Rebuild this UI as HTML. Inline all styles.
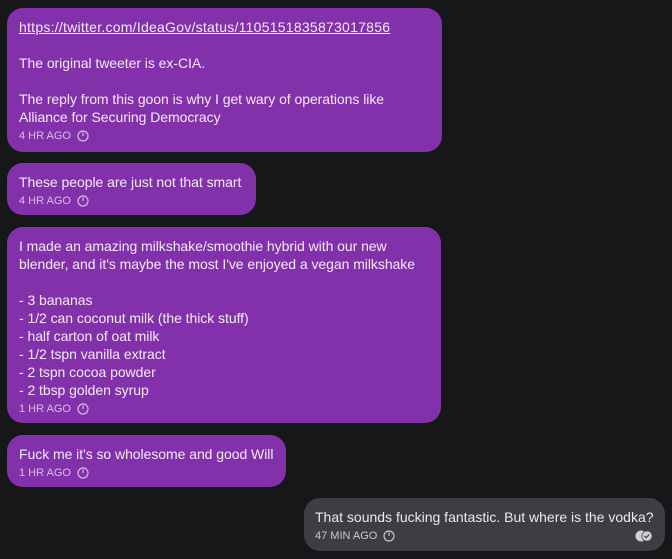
<!DOCTYPE html>
<html><head><style>
body{margin:0;background:#161718;width:672px;height:559px;overflow:hidden;font-family:"Liberation Sans",sans-serif;color:#f3eaf6;position:relative}
.b{position:absolute;background:#8331aa;border-radius:16px;padding:10px 12px 9px 12px;box-sizing:border-box;font-size:14px;line-height:18px;white-space:pre;letter-spacing:-0.05px}
.t{font-size:11px;line-height:18px;margin-top:1px;color:#d6bfe2;letter-spacing:0;display:flex;align-items:center}
.t svg{margin-left:6px}
a{color:#f3eaf6;text-decoration:underline;letter-spacing:0.25px}
.g{background:#3d3e42;color:#eaeaea}
.g .t{color:#c9c9cc}
</style></head><body>
<div class="b" style="left:7px;top:8px;width:435px;height:144px"><a>https://twitter.com/IdeaGov/status/1105151835873017856</a>

The original tweeter is ex-CIA.

The reply from this goon is why I get wary of operations like
Alliance for Securing Democracy
<div class="t">4 HR AGO<svg width="12" height="12" viewBox="0 0 12 12"><circle cx="6" cy="6" r="5" fill="none" stroke="currentColor" stroke-width="1.2"/><path d="M6 2.5V6" stroke="currentColor" stroke-width="1.2"/></svg></div></div>

<div class="b" style="left:7px;top:163px;width:249px;height:52px">These people are just not that smart
<div class="t">4 HR AGO<svg width="12" height="12" viewBox="0 0 12 12"><circle cx="6" cy="6" r="5" fill="none" stroke="currentColor" stroke-width="1.2"/><path d="M6 2.5V6" stroke="currentColor" stroke-width="1.2"/></svg></div></div>

<div class="b" style="left:7px;top:227px;width:434px;height:196px">I made an amazing milkshake/smoothie hybrid with our new
blender, and it's maybe the most I've enjoyed a vegan milkshake

- 3 bananas
- 1/2 can coconut milk (the thick stuff)
- half carton of oat milk
- 1/2 tspn vanilla extract
- 2 tspn cocoa powder
- 2 tbsp golden syrup
<div class="t">1 HR AGO<svg width="12" height="12" viewBox="0 0 12 12"><circle cx="6" cy="6" r="5" fill="none" stroke="currentColor" stroke-width="1.2"/><path d="M6 2.5V6" stroke="currentColor" stroke-width="1.2"/></svg></div></div>

<div class="b" style="left:7px;top:435px;width:279px;height:52px">Fuck me it's so wholesome and good Will
<div class="t">1 HR AGO<svg width="12" height="12" viewBox="0 0 12 12"><circle cx="6" cy="6" r="5" fill="none" stroke="currentColor" stroke-width="1.2"/><path d="M6 2.5V6" stroke="currentColor" stroke-width="1.2"/></svg></div></div>

<div class="b g" style="left:304px;top:498px;width:361px;height:53px;padding-top:10px;padding-left:11px;letter-spacing:0">That sounds fucking fantastic. But where is the vodka?
<div class="t">47 MIN AGO<svg width="12" height="12" viewBox="0 0 12 12"><circle cx="6" cy="6" r="5" fill="none" stroke="currentColor" stroke-width="1.2"/><path d="M6 2.5V6" stroke="currentColor" stroke-width="1.2"/></svg>
<svg style="margin-left:auto" width="18" height="12" viewBox="0 0 18 12"><circle cx="6" cy="6" r="5.5" fill="#d0d0d3"/><circle cx="12" cy="6" r="5.5" fill="#3d3e42"/><circle cx="12" cy="6" r="4.8" fill="#d0d0d3"/><path d="M9.5 6l1.7 1.7 3-3.2" fill="none" stroke="#3d3e42" stroke-width="1.2"/></svg></div></div>
</body></html>
